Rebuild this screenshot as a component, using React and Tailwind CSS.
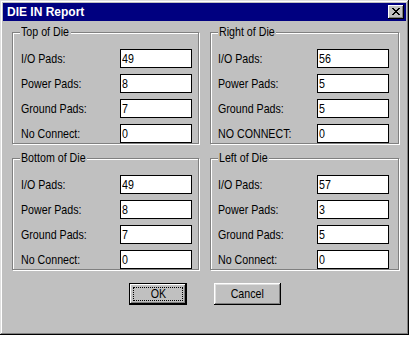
import React from "react";

const groups = {
  top: ["Top of Die", "w-[51px]", [["I/O Pads:", "49"], ["Power Pads:", "8"], ["Ground Pads:", "7"], ["No Connect:", "0"]]],
  right: ["Right of Die", "w-[58px]", [["I/O Pads:", "56"], ["Power Pads:", "5"], ["Ground Pads:", "5"], ["NO CONNECT:", "0"]]],
  bottom: ["Bottom of Die", "w-[67px]", [["I/O Pads:", "49"], ["Power Pads:", "8"], ["Ground Pads:", "7"], ["No Connect:", "0"]]],
  left: ["Left of Die", "w-[51px]", [["I/O Pads:", "57"], ["Power Pads:", "3"], ["Ground Pads:", "5"], ["No Connect:", "0"]]],
};

function N({ children, center }) {
  return (
    <span
      className={
        "inline-block whitespace-nowrap scale-x-[0.82] " + (center ? "origin-center" : "origin-left")
      }
    >
      {children}
    </span>
  );
}

function Group({ data, wide }) {
  const [title, legendW, rows] = data;
  return (
    <div
      className={
        "relative h-[112px] border border-[#808080] shadow-[inset_1px_1px_0_#fff,1px_1px_0_#fff] " +
        (wide ? "w-[189px]" : "w-[187px]")
      }
    >
      <span
        className={
          "absolute left-[7px] top-[-9px] overflow-visible bg-[#c0c0c0] px-[1px] leading-[16px] text-black " +
          legendW
        }
      >
        <N>{title}</N>
      </span>
      <div className={"flex flex-col gap-[6px] pt-[16px] " + (wide ? "pl-[7px]" : "pl-[8px]")}>
        {rows.map(([label, value]) => (
          <div key={label} className="flex h-[19px] items-center">
            <span className="w-[99px] leading-[19px] text-black">
              <N>{label}</N>
            </span>
            <div className="h-[19px] w-[72px] border border-black bg-white pl-[1px] leading-[17px] text-black">
              <N>{value}</N>
            </div>
          </div>
        ))}
      </div>
    </div>
  );
}

export default function App() {
  return (
    <div className="h-[337px] w-[411px] bg-white">
      <div className="flex h-[335px] w-[409px] flex-col bg-[#c0c0c0] p-[3px] font-['Liberation_Sans',sans-serif] text-[13px] shadow-[inset_-1px_-1px_0_#000,inset_1px_1px_0_#dfdfdf,inset_-2px_-2px_0_#808080,inset_2px_2px_0_#fff]">
        <div className="flex h-[18px] items-center justify-between bg-[#000080] pl-[4px] pr-[2px]">
          <span className="text-[12px] font-bold leading-[18px] text-white">DIE IN Report</span>
          <div className="flex h-[14px] w-[16px] items-center justify-center bg-[#c0c0c0] shadow-[inset_-1px_-1px_0_#000,inset_1px_1px_0_#fff,inset_-2px_-2px_0_#808080]">
            <svg width="8" height="7" viewBox="0 0 8 7" shapeRendering="crispEdges" className="mb-[1px]">
              <path
                fill="#000"
                d="M0 0h2v1H0zM6 0h2v1H6zM1 1h2v1H1zM5 1h2v1H5zM2 2h4v1H2zM3 3h2v1H3zM2 4h4v1H2zM1 5h2v1H1zM5 5h2v1H5zM0 6h2v1H0zM6 6h2v1H6z"
              />
            </svg>
          </div>
        </div>
        <div className="mt-[11px] flex gap-[11px] pl-[9px]">
          <Group data={groups.top} />
          <Group data={groups.right} wide />
        </div>
        <div className="mt-[14px] flex gap-[11px] pl-[9px]">
          <Group data={groups.bottom} />
          <Group data={groups.left} wide />
        </div>
        <div className="mt-[13px] flex pl-[126px]">
          <div className="h-[22px] w-[58px] border border-black bg-[#c0c0c0] p-[3px] shadow-[inset_-1px_-1px_0_#000,inset_1px_1px_0_#fff,inset_-2px_-2px_0_#808080]">
            <div className="flex h-full w-full items-center justify-center border border-dotted border-black leading-[12px] text-black">
              <N center>OK</N>
            </div>
          </div>
          <div className="ml-[27px] flex h-[22px] w-[67px] items-center justify-center bg-[#c0c0c0] text-black shadow-[inset_-1px_-1px_0_#000,inset_1px_1px_0_#fff,inset_-2px_-2px_0_#808080,inset_2px_2px_0_#dfdfdf]">
            <N center>Cancel</N>
          </div>
        </div>
      </div>
    </div>
  );
}
